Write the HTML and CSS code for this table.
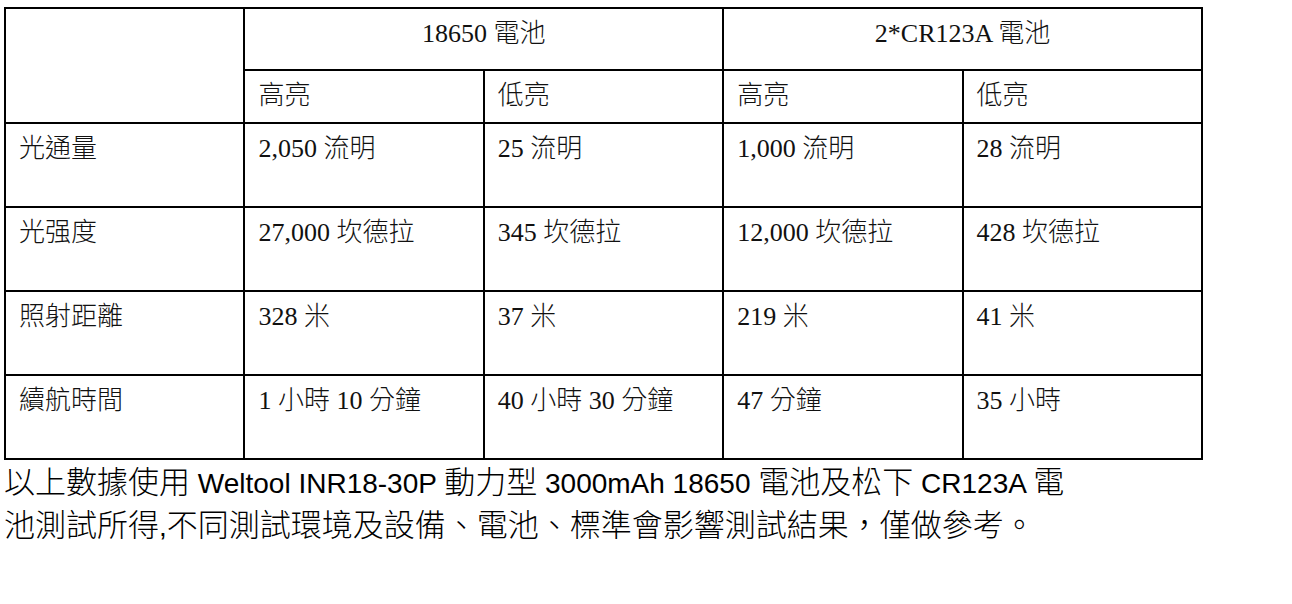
FILE: index.html
```html
<!DOCTYPE html>
<html lang="zh-Hant">
<head>
<meta charset="utf-8">
<title>電池測試</title>
<link rel="stylesheet" href="styles.css">
</head>
<body>
<div class="page">
  <table class="spec">
    <tbody>
      <tr class="r-group">
        <td rowspan="2"></td>
        <td colspan="2" class="center">18650 電池</td>
        <td colspan="2" class="center">2*CR123A 電池</td>
      </tr>
      <tr class="r-mode">
        <td>高亮</td>
        <td>低亮</td>
        <td>高亮</td>
        <td>低亮</td>
      </tr>
      <tr class="r-data">
        <td>光通量</td>
        <td>2,050 流明</td>
        <td>25 流明</td>
        <td>1,000 流明</td>
        <td>28 流明</td>
      </tr>
      <tr class="r-data">
        <td>光强度</td>
        <td>27,000 坎德拉</td>
        <td>345 坎德拉</td>
        <td>12,000 坎德拉</td>
        <td>428 坎德拉</td>
      </tr>
      <tr class="r-data">
        <td>照射距離</td>
        <td>328 米</td>
        <td>37 米</td>
        <td>219 米</td>
        <td>41 米</td>
      </tr>
      <tr class="r-data">
        <td>續航時間</td>
        <td>1 小時 10 分鐘</td>
        <td>40 小時 30 分鐘</td>
        <td>47 分鐘</td>
        <td>35 小時</td>
      </tr>
    </tbody>
  </table>
  <p class="note">以上數據使用<span class="lat"> Weltool INR18-30P </span>動力型<span class="lat"> 3000mAh 18650 </span>電池及松下<span class="lat"> CR123A </span>電<br>池測試所得<span class="lat">,</span>不同測試環境及設備、電池、標準會影響測試結果，僅做參考。</p>
</div>
</body>
</html>
```

FILE: styles.css
```css
html, body {
  margin: 0;
  padding: 0;
  background: #ffffff;
}

.page {
  padding: 7px 0 0 4px;
}

.spec {
  border-collapse: separate;
  border-spacing: 0;
  table-layout: fixed;
  width: 1199px;
  border-top: 2px solid #000;
  border-left: 2px solid #000;
  font-family: "Liberation Serif", "Noto Sans CJK TC", serif;
  font-size: 26px;
  font-weight: 300;
  line-height: 30px;
  color: #111;
}

.spec td {
  box-sizing: border-box;
  border-right: 2px solid #000;
  border-bottom: 2px solid #000;
  padding: 10px 12px 0 13px;
  vertical-align: top;
  text-align: left;
  white-space: nowrap;
}

.spec td.center {
  text-align: center;
  padding-left: 0;
  padding-right: 0;
}

.r-group td { height: 62px; }
.r-mode td { height: 53px; }
.r-data td { height: 84px; }

.note {
  margin: 2px 0 0 0;
  font-family: "Liberation Sans", "Noto Sans CJK TC", sans-serif;
  font-size: 31px;
  font-weight: 300;
  line-height: 42px;
  color: #000;
  white-space: nowrap;
}

.note .lat {
  font-size: 28px;
  font-weight: 400;
}
```
